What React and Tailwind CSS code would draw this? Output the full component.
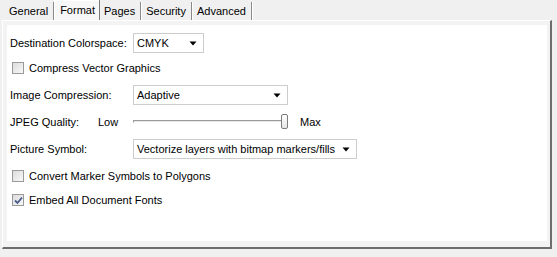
import React from "react";

const tabs = ["General", "Format", "Pages", "Security", "Advanced"];

function Select({ value, width }) {
  return (
    <div
      className="flex h-[20px] items-center justify-between border border-[#cdcdcd] bg-white pl-[3px] pr-[6px]"
      style={{ width }}
    >
      <span>{value}</span>
      <svg width="8" height="5" viewBox="0 0 8 5">
        <path d="M0.5 0.5 L7.5 0.5 L4 4.5 Z" fill="#000" />
      </svg>
    </div>
  );
}

function Checkbox({ label, checked }) {
  return (
    <div className="flex h-[16px] items-center gap-[5px] pl-[2px]">
      <div className="flex h-[12px] w-[12px] items-center justify-center border border-[#9a9a9a] bg-gradient-to-br from-[#dcdcdc] to-[#f8f8f8]">
        {checked && (
          <svg width="9" height="9" viewBox="0 0 9 9">
            <path d="M1 4.5 L3.5 7 L8 1.5" stroke="#4a5a8a" strokeWidth="1.8" fill="none" />
          </svg>
        )}
      </div>
      <span>{label}</span>
    </div>
  );
}

export default function App() {
  return (
    <div
      className="h-[257px] w-[557px] bg-[#f0f0f0] text-[11px] text-black"
      style={{ fontFamily: '"Liberation Sans", Arial, sans-serif' }}
    >
      <div className="flex h-[20px] items-end pl-[4px]">
        {tabs.map((t) => (
          <div
            key={t}
            className={
              t === "Format"
                ? "flex h-[20px] items-center border-l border-t border-white bg-[#f7f7f7] px-[5px] pr-[4px] shadow-[1px_0_0_#7a7a7a]"
                : "flex h-[18px] items-center border-r border-[#8a8a8a] px-[5px] shadow-[1px_0_0_#ffffff]"
            }
          >
            {t}
          </div>
        ))}
      </div>
      <div className="ml-[2px] h-[229px] w-[550px] border-l border-t border-white border-b-[2px] border-r-[2px] border-b-[#6d6d6d] border-r-[#6d6d6d] bg-[#f3f3f3] p-[4px] pb-[6px] pr-[3px]">
        <div className="flex h-full flex-col bg-white pl-[3px] pt-[8px]">
          <div className="flex h-[20px] items-center">
            <span className="w-[123px]">Destination Colorspace:</span>
            <Select value="CMYK" width={71} />
          </div>
          <div className="mt-[7px]">
            <Checkbox label="Compress Vector Graphics" />
          </div>
          <div className="mt-[9px] flex h-[20px] items-center">
            <span className="w-[123px]">Image Compression:</span>
            <Select value="Adaptive" width={155} />
          </div>
          <div className="mt-[9px] flex h-[16px] items-center">
            <span className="w-[88px]">JPEG Quality:</span>
            <span className="w-[35px]">Low</span>
            <div className="relative h-[16px] w-[155px]">
              <div className="absolute left-0 right-[4px] top-[6px] h-[3px] border border-t-[#9a9a9a] border-l-[#9a9a9a] border-b-white border-r-white bg-[#e8e8e8]" />
              <div className="absolute left-[148px] top-0 h-[15px] w-[7px] rounded-[2px] border border-[#7d7d7d] bg-gradient-to-b from-white to-[#e6e6e6]" />
            </div>
            <span className="ml-[12px]">Max</span>
          </div>
          <div className="mt-[9px] flex h-[20px] items-center">
            <span className="w-[123px]">Picture Symbol:</span>
            <Select value="Vectorize layers with bitmap markers/fills" width={224} />
          </div>
          <div className="mt-[9px]">
            <Checkbox label="Convert Marker Symbols to Polygons" />
          </div>
          <div className="mt-[8px]">
            <Checkbox label="Embed All Document Fonts" checked />
          </div>
        </div>
      </div>
    </div>
  );
}
